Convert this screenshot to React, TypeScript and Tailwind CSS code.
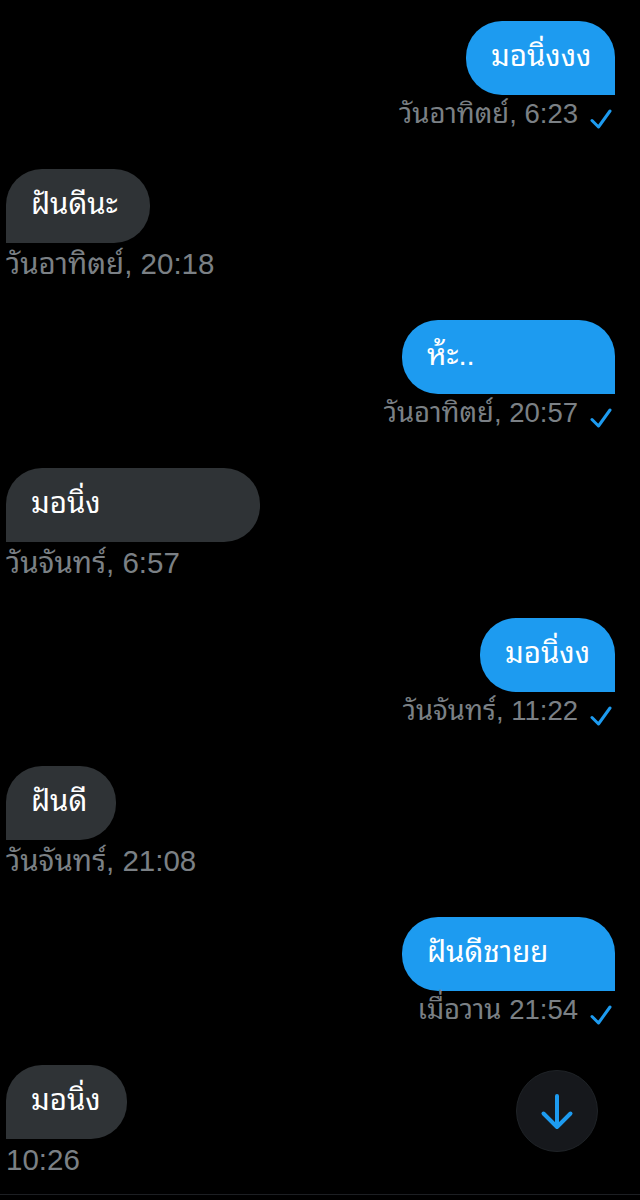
const Check = () => (
  <svg width="22" height="20" viewBox="0 0 22 20" fill="none" className="mt-[10px] shrink-0">
    <path d="M2 11.5 L8.5 18 L20 2" stroke="#1d9bf0" strokeWidth="3" strokeLinecap="round" strokeLinejoin="round" />
  </svg>
);

type Msg = { text: string; time: string; mine: boolean; w: string; pitch: string };

const messages: Msg[] = [
  { text: "มอนิ่งงง", time: "วันอาทิตย์, 6:23", mine: true, w: "w-[149px]", pitch: "h-[148px]" },
  { text: "ฝันดีนะ", time: "วันอาทิตย์, 20:18", mine: false, w: "w-[144px]", pitch: "h-[151px]" },
  { text: "ห้ะ..", time: "วันอาทิตย์, 20:57", mine: true, w: "w-[213px]", pitch: "h-[148px]" },
  { text: "มอนิ่ง", time: "วันจันทร์, 6:57", mine: false, w: "w-[254px]", pitch: "h-[150px]" },
  { text: "มอนิ่งง", time: "วันจันทร์, 11:22", mine: true, w: "w-[135px]", pitch: "h-[148px]" },
  { text: "ฝันดี", time: "วันจันทร์, 21:08", mine: false, w: "w-[110px]", pitch: "h-[151px]" },
  { text: "ฝันดีชายย", time: "เมื่อวาน 21:54", mine: true, w: "w-[213px]", pitch: "h-[148px]" },
  { text: "มอนิ่ง", time: "10:26", mine: false, w: "w-[121px]", pitch: "h-[114px]" },
];

export default function App() {
  return (
    <div className="relative h-[1200px] w-[640px] overflow-hidden bg-black pt-[21px] font-['Liberation_Sans','Noto_Sans_Thai_Looped','Noto_Sans_Thai',sans-serif]">
      {messages.map((m, i) =>
        m.mine ? (
          <div key={i} className={`flex flex-col items-end pr-[25px] ${m.pitch}`}>
            <div className={`flex h-[74px] shrink-0 items-center rounded-[36px] rounded-br-none bg-[#1d9bf0] pb-[3px] pl-[25px] text-[29.5px] text-white ${m.w}`}>
              {m.text}
            </div>
            <div className="mt-[1px] flex h-[36px] items-center gap-[12px] pr-[3px] text-[27.5px] text-[#7b8085]">
              <span>{m.time}</span>
              <Check />
            </div>
          </div>
        ) : (
          <div key={i} className={`flex flex-col items-start pl-[6px] ${m.pitch}`}>
            <div className={`flex h-[74px] shrink-0 items-center rounded-[36px] rounded-bl-none bg-[#2f3336] pb-[3px] pl-[25px] text-[29.5px] text-white ${m.w}`}>
              {m.text}
            </div>
            <div className="mt-[3px] flex h-[36px] items-center text-[29.5px] text-[#7b8085]">
              {m.time}
            </div>
          </div>
        ),
      )}

      <div className="absolute left-[516px] top-[1070px] flex h-[82px] w-[82px] items-center justify-center rounded-full border border-[#1f2327] bg-[#16181c] pt-[2px]">
        <svg width="34" height="38" viewBox="0 0 34 38" fill="none">
          <path d="M17 3 V34 M3.5 20.5 L17 34 L30.5 20.5" stroke="#1d9bf0" strokeWidth="4" strokeLinecap="round" strokeLinejoin="round" />
        </svg>
      </div>
      <div className="absolute bottom-[5px] left-0 h-px w-full bg-[#1d1f23]" />
    </div>
  );
}
